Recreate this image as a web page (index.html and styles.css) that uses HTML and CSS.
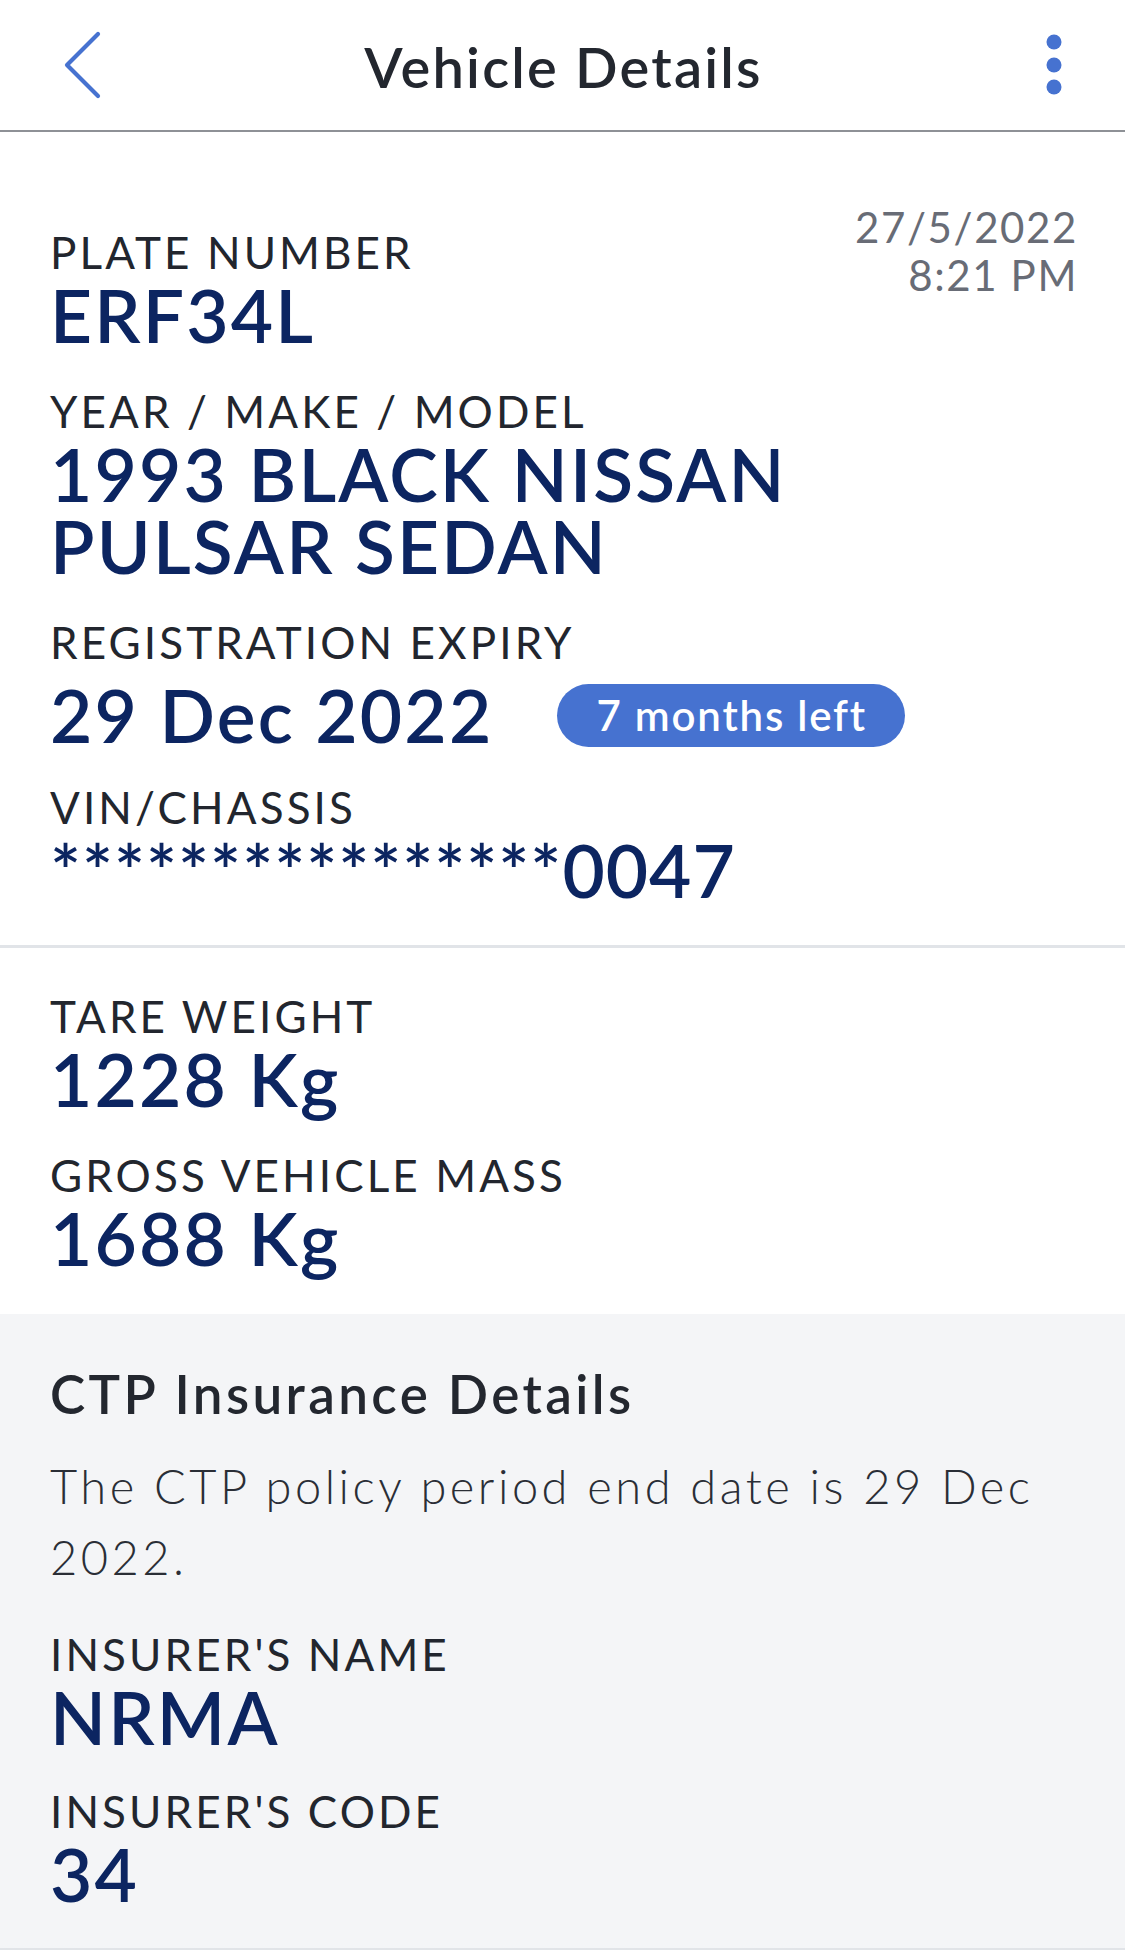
FILE: index.html
```html
<!DOCTYPE html>
<html lang="en">
<head>
<meta charset="utf-8">
<title>Vehicle Details</title>
<link rel="stylesheet" href="styles.css">
</head>
<body>
<div class="screen">
  <header class="topbar">
    <div class="topbar-left">
      <svg class="back-icon" width="44" height="72" viewBox="0 0 44 72" aria-hidden="true">
        <path d="M35 4 L4 35 L35 66" fill="none" stroke="#4672d0" stroke-width="4.2" stroke-linecap="round" stroke-linejoin="round"/>
      </svg>
    </div>
    <h1 class="topbar-title">Vehicle Details</h1>
    <div class="topbar-right">
      <svg class="more-icon" width="20" height="68" viewBox="0 0 20 68" aria-hidden="true">
        <circle cx="10" cy="10" r="7.5" fill="#4672d0"/>
        <circle cx="10" cy="33" r="7.5" fill="#4672d0"/>
        <circle cx="10" cy="55" r="7.5" fill="#4672d0"/>
      </svg>
    </div>
  </header>

  <section class="section section-main">
    <div class="main-row">
      <div class="timestamp">
        <div>27/5/2022</div>
        <div>8:21 PM</div>
      </div>
      <div class="fields">
        <div class="field">
          <div class="label">PLATE NUMBER</div>
          <div class="value">ERF34L</div>
        </div>
        <div class="field">
          <div class="label">YEAR / MAKE / MODEL</div>
          <div class="value">1993 BLACK NISSAN<br>PULSAR SEDAN</div>
        </div>
        <div class="field field-tight">
          <div class="label">REGISTRATION EXPIRY</div>
          <div class="value-row">
            <div class="value">29 Dec 2022</div>
            <span class="badge">7 months left</span>
          </div>
        </div>
        <div class="field field-after-row">
          <div class="label">VIN/CHASSIS</div>
          <div class="value vin">****************0047</div>
        </div>
      </div>
    </div>
  </section>

  <section class="section section-weights">
    <div class="field">
      <div class="label">TARE WEIGHT</div>
      <div class="value">1228 Kg</div>
    </div>
    <div class="field">
      <div class="label">GROSS VEHICLE MASS</div>
      <div class="value">1688 Kg</div>
    </div>
  </section>

  <section class="section section-ctp">
    <h2 class="ctp-title">CTP Insurance Details</h2>
    <p class="ctp-text">The CTP policy period end date is 29 Dec 2022.</p>
    <div class="field field-ctp">
      <div class="label">INSURER'S NAME</div>
      <div class="value">NRMA</div>
    </div>
    <div class="field">
      <div class="label">INSURER'S CODE</div>
      <div class="value">34</div>
    </div>
  </section>
</div>
</body>
</html>
```

FILE: styles.css
```css
* {
  box-sizing: border-box;
}

html, body {
  margin: 0;
  padding: 0;
  background: #ffffff;
}

body {
  font-family: "Lato", "Open Sans", sans-serif;
  color: #22262e;
  width: 1125px;
  height: 1954px;
  overflow: hidden;
}

.screen {
  width: 1125px;
}

/* Top bar */
.topbar {
  height: 132px;
  display: grid;
  grid-template-columns: 1fr auto 1fr;
  align-items: center;
  border-bottom: 2px solid #8e9196;
  padding: 0 61px 0 63px;
}

.topbar-left {
  display: flex;
  align-items: center;
  padding-top: 2px;
}

.topbar-right {
  display: flex;
  justify-content: flex-end;
  align-items: center;
  padding-top: 2px;
}

.back-icon,
.more-icon {
  display: block;
}

.topbar-title {
  margin: 0;
  font-size: 56px;
  font-weight: 600;
  line-height: 60px;
  color: #23272f;
  letter-spacing: 2.2px;
  padding-top: 4px;
}

/* Sections */
.section {
  padding-left: 50px;
  padding-right: 51px;
}

.section-main {
  padding-top: 71px;
  padding-bottom: 39px;
  border-bottom: 3px solid #e1e4e8;
}

.main-row::after {
  content: "";
  display: block;
  clear: both;
}

.timestamp {
  float: right;
  margin-right: -4px;
  text-align: right;
  font-size: 42px;
  line-height: 48px;
  color: #686c76;
  letter-spacing: 1.6px;
}

.fields {
  padding-top: 22px;
}

.field + .field {
  margin-top: 33px;
}

.field-tight {
  margin-top: 29px;
}

.field + .field-after-row {
  margin-top: 29px;
}

.label {
  font-size: 44px;
  line-height: 54px;
  font-weight: 400;
  color: #22262e;
  letter-spacing: 3.1px;
}

.value {
  font-size: 73px;
  line-height: 72px;
  font-weight: 600;
  color: #0c2561;
  letter-spacing: 2.2px;
  white-space: nowrap;
}

.value-row {
  display: flex;
  align-items: center;
  margin-top: 10px;
}

.badge {
  margin-left: 64px;
  height: 63px;
  padding: 0 38px 0 39px;
  border-radius: 32px;
  background: #4672d0;
  color: #ffffff;
  font-size: 42px;
  font-weight: 600;
  line-height: 63px;
  letter-spacing: 1.8px;
  white-space: nowrap;
}

.vin {
  letter-spacing: 1px;
}

.section-weights {
  padding-top: 41px;
  padding-bottom: 40px;
}

.section-ctp {
  background: #f4f5f7;
  padding-top: 50px;
  padding-bottom: 38px;
  border-bottom: 2px solid #e1e4e8;
}

.ctp-title {
  margin: 0;
  font-size: 53px;
  line-height: 60px;
  font-weight: 600;
  color: #23272f;
  letter-spacing: 3.4px;
}

.ctp-text {
  margin: 27px 0 0 0;
  font-size: 47px;
  line-height: 71px;
  font-weight: 300;
  color: #2a2e36;
  letter-spacing: 3.5px;
}

.field-ctp {
  margin-top: 34px;
}

.section-ctp .field + .field {
  margin-top: 31px;
}
```
